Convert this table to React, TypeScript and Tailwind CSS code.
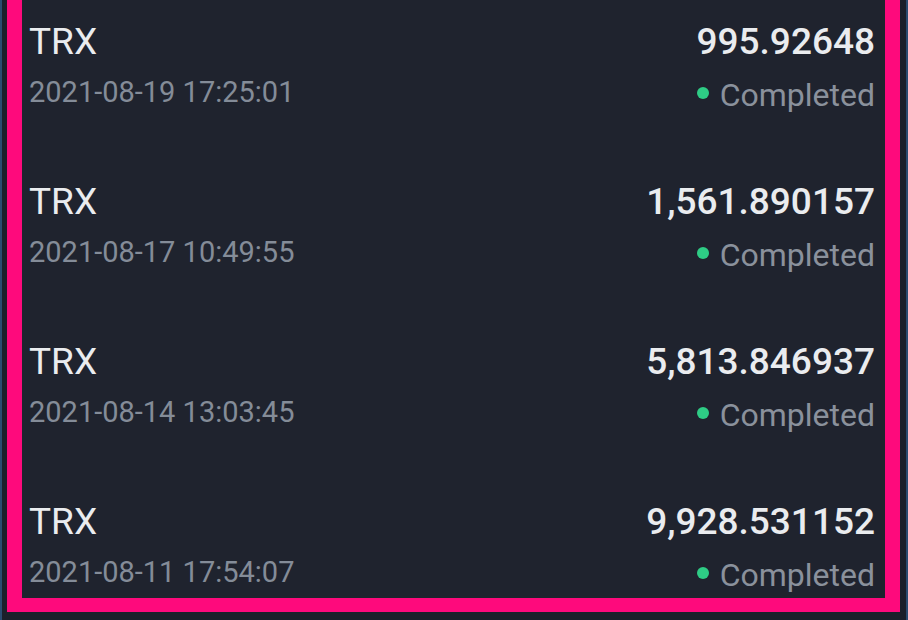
import React from "react";

const rows = [
  { coin: "TRX", date: "2021-08-19 17:25:01", amount: "995.92648" },
  { coin: "TRX", date: "2021-08-17 10:49:55", amount: "1,561.890157" },
  { coin: "TRX", date: "2021-08-14 13:03:45", amount: "5,813.846937" },
  { coin: "TRX", date: "2021-08-11 17:54:07", amount: "9,928.531152" },
];

export default function App() {
  return (
    <div
      className="w-[908px] h-[620px] overflow-hidden bg-[#1b202a] border-l-[2px] border-r-[2px] border-l-[#2b4c70] border-r-[#2b4c70] pl-[5px] pr-[6px] pb-[8px] flex"
      style={{ fontFamily: "Roboto, 'Liberation Sans', sans-serif" }}
    >
      <div className="flex-1 bg-[#1f232e] border-l-[15px] border-r-[15px] border-b-[14px] border-[#fe0a7c] pl-[7px] pr-[10px] flex flex-col">
        {rows.map((r, i) => (
          <div key={i} className="h-[160px] shrink-0 flex justify-between pt-[19px]">
            <div className="flex flex-col">
              <div className="text-[37px] leading-[46px] text-[#eaecef]">{r.coin}</div>
              <div className="text-[29px] leading-[36px] mt-[9px] text-[#848c98]">{r.date}</div>
            </div>
            <div className="flex flex-col items-end">
              <div className="text-[37px] leading-[46px] font-medium text-[#eaecef]">{r.amount}</div>
              <div className="flex items-center mt-[12px] h-[36px]">
                <span className="w-[12px] h-[12px] rounded-full bg-[#2ecc85] mr-[11px] -mt-[4px]" />
                <span className="text-[32px] leading-[36px] text-[#8a919c]">Completed</span>
              </div>
            </div>
          </div>
        ))}
      </div>
    </div>
  );
}
